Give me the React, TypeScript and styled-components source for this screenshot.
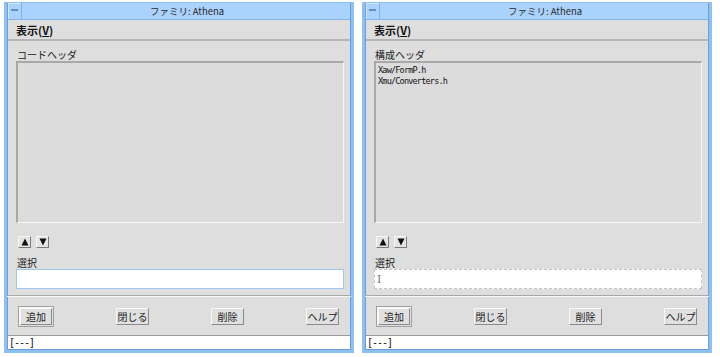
import React from "react";
import styled, { createGlobalStyle } from "styled-components";

const Global = createGlobalStyle`
  html, body { margin: 0; padding: 0; background: #ffffff; }
  body { font-family: "Noto Sans CJK JP", "Noto Sans", sans-serif; }
`;

const Page = styled.div`
  display: flex;
  gap: 8px;
  padding: 2px 0 0 4px;
  width: 720px;
  height: 357px;
  box-sizing: border-box;
`;

const Frame = styled.div`
  width: 350px;
  height: 351px;
  box-sizing: border-box;
  border: 3px solid #8fc0f4;
  border-top-width: 1px;
  box-shadow: inset 0 0 0 1px #6a9fdc;
  background: #dedede;
  display: flex;
  flex-direction: column;
  overflow: hidden;
`;

const TitleBar = styled.div`
  height: 16px;
  flex: none;
  display: flex;
  align-items: stretch;
  background: #a9d2fd;
  border-bottom: 1px solid #7fb4ee;
  margin: 0 1px;
`;

const CloseBox = styled.div`
  width: 13px;
  border-right: 1px solid #7fb0e8;
  box-shadow: inset 1px 1px 0 #d4e8ff;
  display: flex;
  align-items: center;
  justify-content: center;
  &::after {
    content: "";
    width: 7px;
    height: 2px;
    background: #6090c8;
    margin-top: -3px;
  }
`;

const Title = styled.div`
  flex: 1;
  text-align: center;
  font-size: 9.5px;
  line-height: 16px;
  color: #2a2a2a;
  padding-left: 2px;
`;

const MenuBar = styled.div`
  height: 19px;
  flex: none;
  display: flex;
  align-items: center;
  padding-left: 8px;
  margin: 0 1px;
  border-bottom: 2px solid #b4b4b4;
  font-size: 11px;
  font-weight: bold;
  color: #111;
`;

const Underline = styled.span`
  text-decoration: underline;
`;

const Body = styled.div`
  flex: none;
  display: flex;
  flex-direction: column;
  padding: 7px 7px 0 9px;
`;

const Label = styled.div`
  font-size: 10px;
  line-height: 13px;
  height: 13px;
  color: #222;
  padding-left: 1px;
`;

const ListBox = styled.div`
  height: 155px;
  border: 1px solid #f6f6f6;
  border-top: 2px solid #a8a8a8;
  border-left: 2px solid #a8a8a8;
  background: #dcdcdc;
  padding: 2px 2px;
  display: flex;
  flex-direction: column;
  box-sizing: content-box;
`;

const ListItem = styled.div`
  font-family: "DejaVu Sans Mono", "Liberation Mono", monospace;
  font-size: 8.5px;
  line-height: 11px;
  color: #111;
  letter-spacing: -0.8px;
`;

const ArrowRow = styled.div`
  display: flex;
  gap: 5px;
  margin: 13px 0 0 2px;
`;

const ArrowButton = styled.div`
  width: 13px;
  height: 12px;
  box-sizing: border-box;
  border: 1px solid #f8f8f8;
  border-right-color: #7a7a7a;
  border-bottom-color: #7a7a7a;
  background: #e4e4e4;
  display: flex;
  align-items: center;
  justify-content: center;
`;

const FieldLabel = styled(Label)`
  margin-top: 8px;
`;

const TextField = styled.div<{ $focused?: boolean }>`
  height: 20px;
  box-sizing: border-box;
  background: #ffffff;
  border: 1px ${(p) => (p.$focused ? "solid #9ec6ee" : "dashed #c4c4c4")};
  display: flex;
  align-items: center;
  padding-left: 2px;
`;

const Caret = styled.span`
  font-family: "DejaVu Serif", serif;
  font-size: 11px;
  color: #777;
  line-height: 11px;
`;

const Separator = styled.div`
  height: 0;
  border-top: 1px solid #a8a8a8;
  border-bottom: 1px solid #f6f6f6;
  margin: 6px -7px 0 -9px;
`;

const ButtonRow = styled.div`
  height: 38px;
  display: flex;
  align-items: center;
  justify-content: space-between;
  padding: 0 5px 0 2px;
`;

const DefaultRing = styled.div`
  border: 1px solid #a0a0a0;
  padding: 1px;
  box-shadow: inset 1px 1px 0 #f8f8f8;
`;

const Button = styled.div<{ $w: number }>`
  width: ${(p) => p.$w}px;
  height: 17px;
  box-sizing: border-box;
  border: 1px solid #f8f8f8;
  border-right-color: #8a8a8a;
  border-bottom-color: #8a8a8a;
  background: #e0e0e0;
  font-size: 10px;
  color: #222;
  display: flex;
  align-items: center;
  justify-content: center;
`;

const StatusBar = styled.div`
  height: 13px;
  flex: none;
  background: #ffffff;
  border-top: 1px solid #9a9a9a;
  margin: 0 1px 1px 1px;
  font-family: "DejaVu Sans Mono", "Liberation Mono", monospace;
  font-size: 10px;
  line-height: 13px;
  padding-left: 1px;
  color: #111;
  letter-spacing: -1px;
`;

const Up = () => (
  <svg width="8" height="8" viewBox="0 0 8 8">
    <polygon points="4,0.5 7.5,7.5 0.5,7.5" fill="#111" />
  </svg>
);
const Down = () => (
  <svg width="8" height="8" viewBox="0 0 8 8">
    <polygon points="0.5,0.5 7.5,0.5 4,7.5" fill="#111" />
  </svg>
);

type WinProps = { header: string; items: string[]; focused: boolean };

const Window: React.FC<WinProps> = ({ header, items, focused }) => (
  <Frame>
    <TitleBar>
      <CloseBox />
      <Title>ファミリ: Athena</Title>
    </TitleBar>
    <MenuBar>
      表示(<Underline>V</Underline>)
    </MenuBar>
    <Body>
      <Label>{header}</Label>
      <ListBox>
        {items.map((it) => (
          <ListItem key={it}>{it}</ListItem>
        ))}
      </ListBox>
      <ArrowRow>
        <ArrowButton>
          <Up />
        </ArrowButton>
        <ArrowButton>
          <Down />
        </ArrowButton>
      </ArrowRow>
      <FieldLabel>選択</FieldLabel>
      <TextField $focused={focused}>{!focused && <Caret>I</Caret>}</TextField>
      <Separator />
      <ButtonRow>
        <DefaultRing>
          <Button $w={32}>追加</Button>
        </DefaultRing>
        <Button $w={33}>閉じる</Button>
        <Button $w={33}>削除</Button>
        <Button $w={33}>ヘルプ</Button>
      </ButtonRow>
    </Body>
    <StatusBar>[---]</StatusBar>
  </Frame>
);

export default function App() {
  return (
    <>
      <Global />
      <Page>
        <Window header="コードヘッダ" items={[]} focused />
        <Window
          header="構成ヘッダ"
          items={["Xaw/FormP.h", "Xmu/Converters.h"]}
          focused={false}
        />
      </Page>
    </>
  );
}
